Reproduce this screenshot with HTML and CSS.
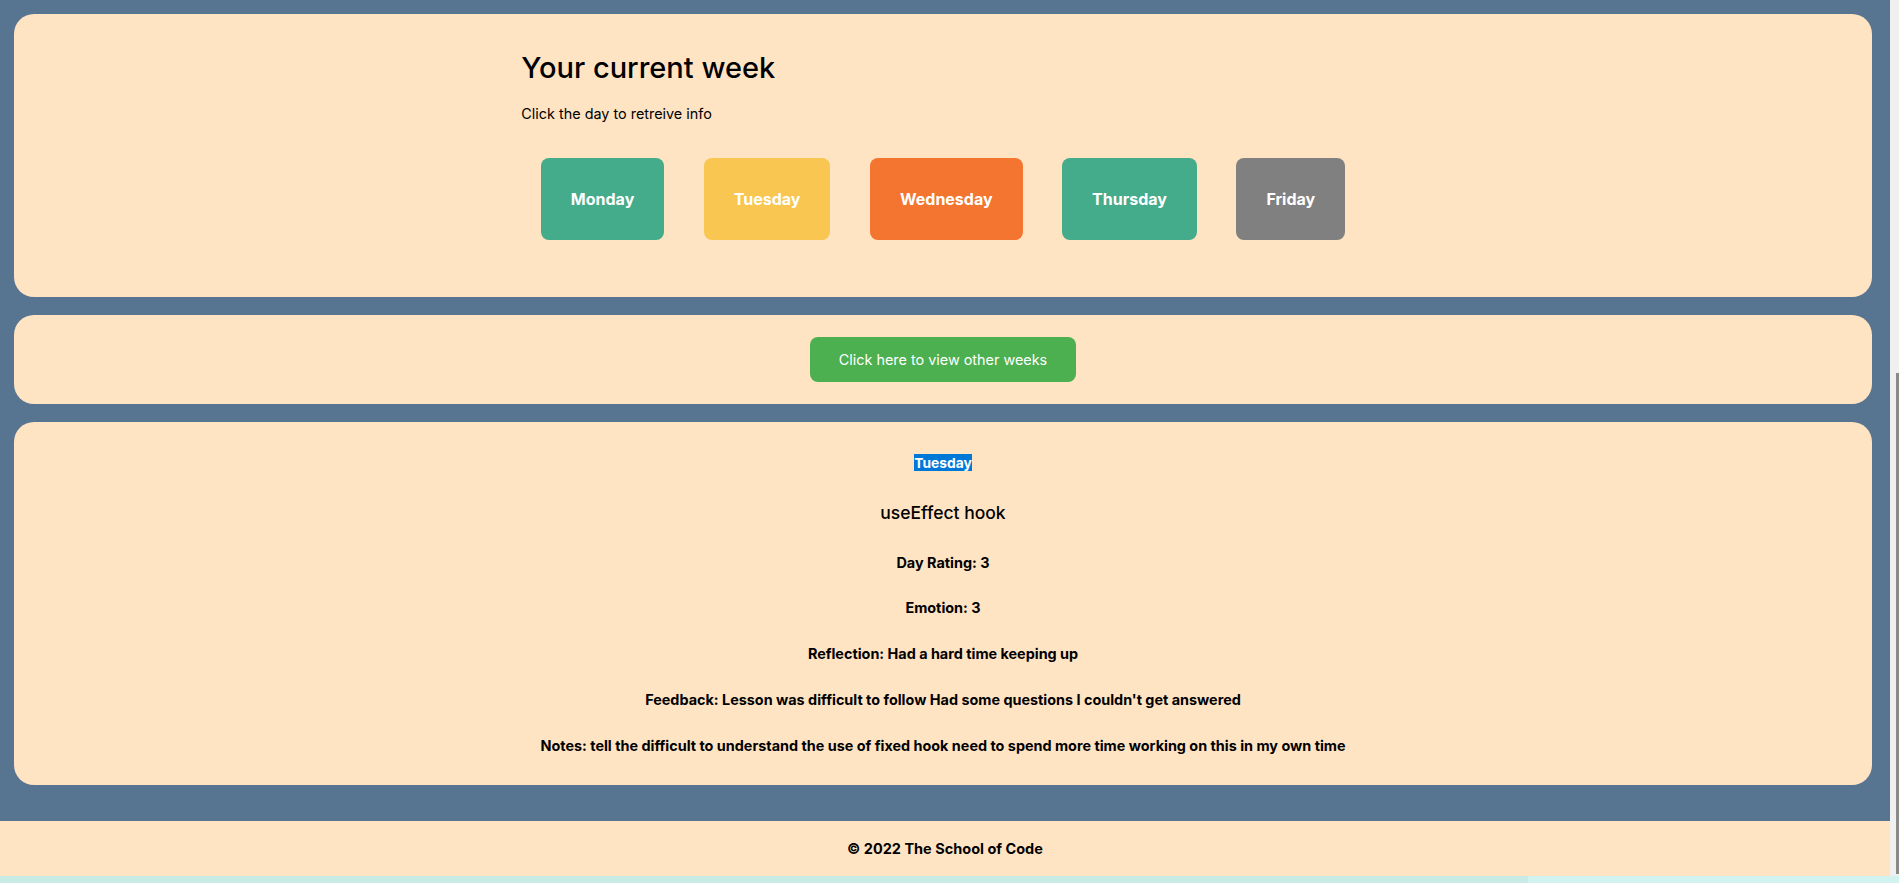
FILE: index.html
```html
<!DOCTYPE html>
<html lang="en">
<head>
<meta charset="utf-8">
<title>Your current week</title>
<link rel="stylesheet" href="styles.css">
</head>
<body>
<div class="viewport">
  <div class="page">
    <main class="main">
      <section class="card week-card">
        <div class="week">
          <h1 class="week-title">Your current week</h1>
          <p class="week-sub">Click the day to retreive info</p>
          <div class="days">
            <button class="day day-green">Monday</button>
            <button class="day day-yellow">Tuesday</button>
            <button class="day day-orange">Wednesday</button>
            <button class="day day-green">Thursday</button>
            <button class="day day-grey">Friday</button>
          </div>
        </div>
      </section>
      <section class="card weeks-card">
        <button class="weeks-btn">Click here to view other weeks</button>
      </section>
      <section class="card detail-card">
        <h5 class="line day-name"><span class="selected">Tuesday</span></h5>
        <h3 class="topic">useEffect hook</h3>
        <h5 class="line">Day Rating: 3</h5>
        <h5 class="line">Emotion: 3</h5>
        <h5 class="line">Reflection: Had a hard time keeping up</h5>
        <h5 class="line">Feedback: Lesson was difficult to follow Had some questions I couldn't get answered</h5>
        <h5 class="line">Notes: tell the difficult to understand the use of fixed hook need to spend more time working on this in my own time</h5>
      </section>
    </main>
    <footer class="footer">© 2022 The School of Code</footer>
  </div>
  <div class="vscroll"><div class="vthumb"></div></div>
</div>
<div class="hscroll"><div class="hthumb"></div></div>
</body>
</html>
```
FILE: styles.css
```css
html, body {
  margin: 0;
  padding: 0;
}
body {
  height: 883px;
  overflow: hidden;
  font-family: Inter, "Liberation Sans", Arial, sans-serif;
  color: #000;
  background: #cff2ee;
}
.viewport {
  display: flex;
  height: 876px;
}
.page {
  flex: 1;
  background: #577590;
  display: flex;
  flex-direction: column;
}
.main {
  display: flex;
  flex-direction: column;
  gap: 18px;
  padding: 14px 18px 0 14px;
}
.card {
  background: #ffe4c4;
  border-radius: 20px;
}
.week-card {
  height: 283px;
  box-sizing: border-box;
  padding-top: 36px;
  display: flex;
  justify-content: center;
}
.week {
  display: flex;
  flex-direction: column;
  align-items: flex-start;
}
.week-title {
  margin: 0;
  font-size: 29px;
  font-weight: 500;
  line-height: 35px;
}
.week-sub {
  margin: 19.75px 0 0;
  font-size: 14.4px;
  line-height: 18px;
}
.days {
  display: flex;
  gap: 39.5px;
  margin: 35.25px 19.5px 0;
}
.day {
  border: none;
  border-radius: 8px;
  color: #fff;
  font-family: Inter, "Liberation Sans", Arial, sans-serif;
  font-size: 16px;
  font-weight: 700;
  line-height: 22px;
  padding: 30px 30px;
}
.day-green { background: #44ab8b; }
.day-yellow { background: #f9c652; }
.day-orange { background: #f3752f; }
.day-grey { background: #808080; }

.weeks-card {
  padding: 22px 0;
  display: flex;
  justify-content: center;
}
.weeks-btn {
  border: none;
  border-radius: 8px;
  background: #4caf50;
  color: #fff;
  font-family: Inter, "Liberation Sans", Arial, sans-serif;
  font-size: 14.4px;
  line-height: 18px;
  padding: 13.5px 29px;
}

.detail-card {
  padding: 32px 20px 31.5px;
  display: flex;
  flex-direction: column;
  align-items: center;
  gap: 28.75px;
  text-align: center;
}
.line {
  margin: 0;
  font-size: 14.4px;
  font-weight: 700;
  line-height: 17px;
}
.day-name {
  font-size: 13.8px;
}
.selected {
  background: #0078d7;
  color: #fff;
  padding: 0.5px 0;
}
.topic {
  margin: 1.75px 0 2.25px;
  font-size: 17.5px;
  font-weight: 500;
  line-height: 21px;
}

.footer {
  margin-top: 36px;
  height: 55px;
  background: #ffe4c4;
  display: flex;
  align-items: center;
  justify-content: center;
  font-size: 14.5px;
  font-weight: 700;
}

.vscroll {
  width: 9px;
  background: #f0f0f0;
  position: relative;
}
.vthumb {
  position: absolute;
  right: 0;
  top: 373px;
  width: 3px;
  height: 501px;
  background: #8a8a8a;
}
.hscroll {
  height: 7px;
  background: #d2f3ef;
}
.hthumb {
  width: 1528px;
  height: 7px;
  background: #c8ebe6;
}
```
